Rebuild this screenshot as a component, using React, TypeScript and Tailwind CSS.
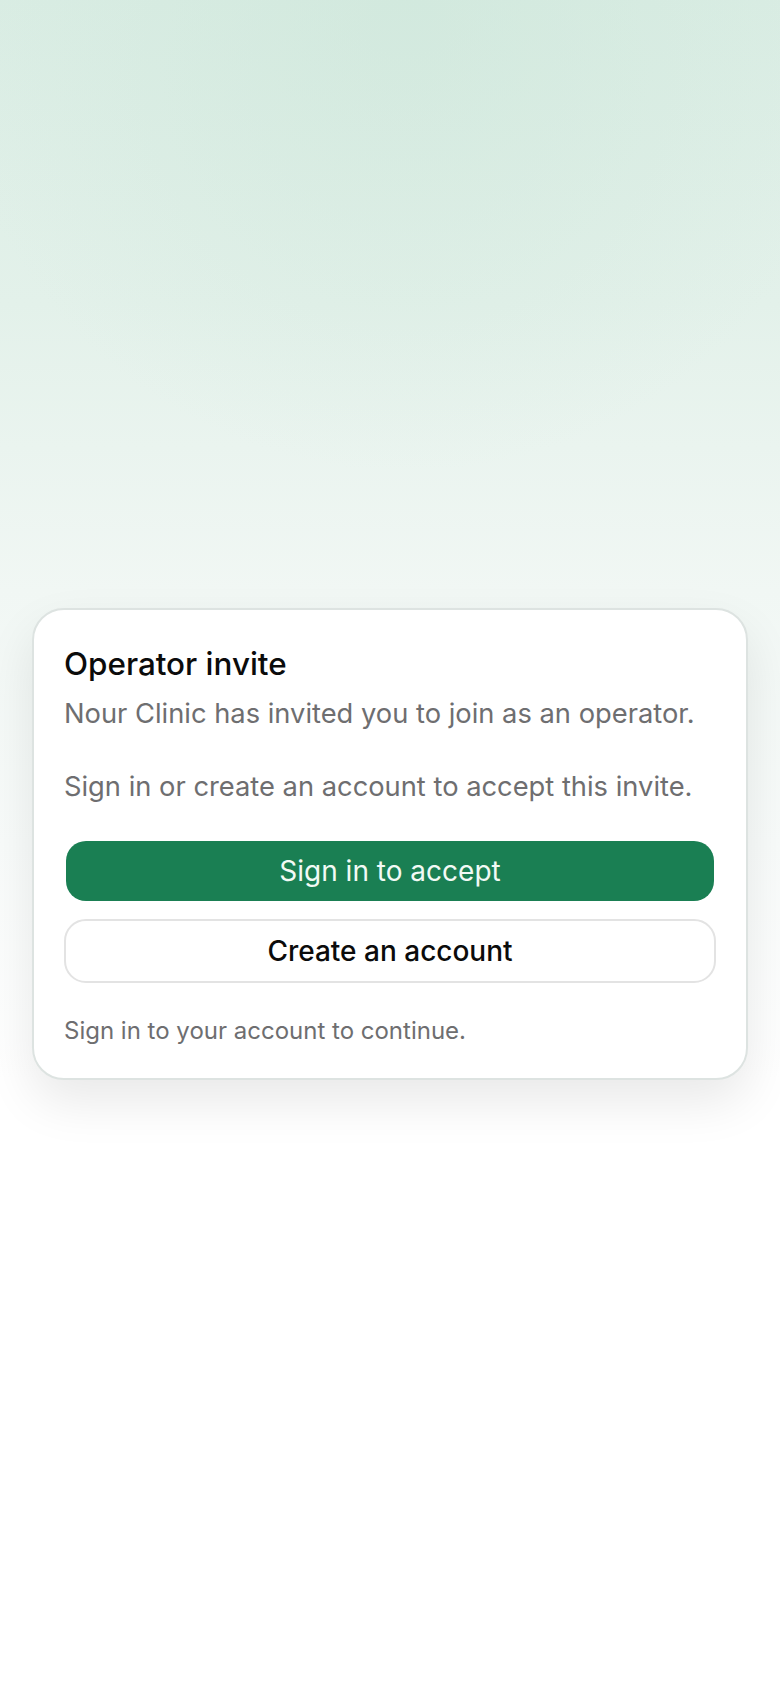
import React from "react";

export default function App() {
  return (
    <div
      className="min-h-screen w-full flex items-center justify-center px-8 bg-[radial-gradient(ellipse_60%_28%_at_52%_0%,rgba(200,228,214,0.45),rgba(255,255,255,0)_100%),linear-gradient(180deg,#daede4_0%,#e3f1ea_18%,#f1f7f4_35%,#f8fbfa_50%,#ffffff_64%)]"
      style={{ fontFamily: "Inter, 'Noto Sans', sans-serif" }}
    >
      <div className="w-full rounded-[32px] border-2 border-[#dde3e1] bg-white px-[30px] pt-[34px] pb-[29px] shadow-[0_22px_50px_rgba(0,0,0,0.09)]">
        <h1 className="text-[31.4px] leading-[40px] font-medium text-[#0b0b0b]">Operator invite</h1>
        <p className="mt-[10px] text-[27.3px] leading-[40px] text-[#6e6e70]">
          Nour Clinic has invited you to join as an operator.
        </p>
        <p className="mt-[33px] text-[27.3px] leading-[40px] text-[#6e6e70]">
          Sign in or create an account to accept this invite.
        </p>
        <button className="mt-[34px] mx-[2px] w-[calc(100%-4px)] h-[60px] rounded-[20px] bg-[#1a7f53] text-[28px] leading-[40px] text-[#f2faf5] flex items-center justify-center">
          Sign in to accept
        </button>
        <button className="mt-[18px] w-full h-[64px] rounded-[22px] border-2 border-[#e3e3e3] bg-white text-[28px] leading-[40px] font-medium text-[#0b0b0b] flex items-center justify-center">
          Create an account
        </button>
        <p className="mt-[30px] text-[24px] leading-[36px] text-[#6e6e70]">
          Sign in to your account to continue.
        </p>
      </div>
    </div>
  );
}
